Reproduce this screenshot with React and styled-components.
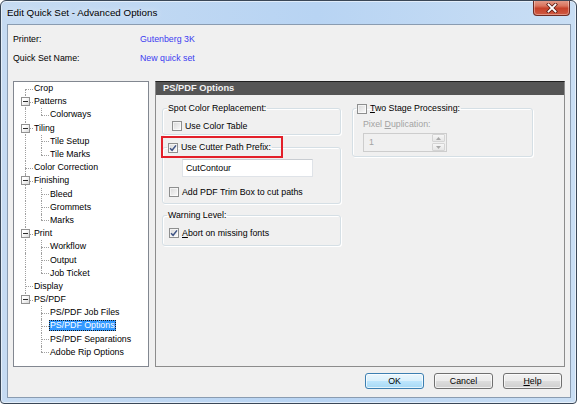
import React from 'react';
import styled, { createGlobalStyle, css } from 'styled-components';

const FONT = `"Liberation Sans", Arial, sans-serif`;

const Global = createGlobalStyle`
  html, body { margin: 0; padding: 0; background: #ffffff; }
  body { width: 577px; height: 404px; overflow: hidden; }
  #root { width: 577px; height: 404px; }
`;

const Window = styled.div`
  width: 577px;
  height: 404px;
  box-sizing: border-box;
  border: 1px solid #3a4757;
  border-radius: 6px 6px 4px 4px;
  background: linear-gradient(90deg, #c6dbf2 0%, #b8d4f3 55%, #c9def4 100%);
  box-shadow: inset 0 0 0 1px rgba(255, 255, 255, 0.55);
  display: flex;
  flex-direction: column;
  overflow: hidden;
  font-family: ${FONT};
  font-size: 8.8px;
  color: #000;
`;

const TitleBar = styled.div`
  height: 23px;
  flex-shrink: 0;
  display: flex;
  align-items: flex-start;
  justify-content: space-between;
  padding-left: 6px;
  padding-right: 6px;
`;

const Title = styled.span`
  font-size: 9.8px;
  line-height: 23px;
  color: #000;
  text-shadow: 0 0 6px rgba(255, 255, 255, 0.9);
`;

const CloseButton = styled.div`
  width: 37px;
  height: 16px;
  margin-top: -1px;
  box-sizing: border-box;
  border: 1px solid #6d2b23;
  border-top: none;
  border-radius: 0 0 4px 4px;
  background: linear-gradient(180deg, #e4a08f 0%, #d9735d 40%, #c6412a 55%, #cf5a42 100%);
  box-shadow: inset 0 0 0 1px rgba(255, 255, 255, 0.35);
  display: flex;
  align-items: center;
  justify-content: center;
`;

const Client = styled.div`
  flex: 1;
  margin: 0 5px 5px 6px;
  border: 1px solid #8a9cb1;
  background: #f0f0f0;
  display: flex;
  flex-direction: column;
  padding: 4px 5px 8px 5px;
  min-height: 0;
`;

const Info = styled.div`
  display: grid;
  grid-template-columns: 127px 1fr;
  grid-auto-rows: 19px;
  align-items: center;
`;

const InfoValue = styled.span`
  color: #3b3bf0;
`;

const Main = styled.div`
  margin-top: 14px;
  height: 286px;
  display: flex;
  gap: 6px;
`;

const Tree = styled.div`
  width: 136px;
  box-sizing: border-box;
  border: 1px solid #828790;
  background: #ffffff;
  padding-left: 3px;
  display: flex;
  flex-direction: column;
`;

const TreeRow = styled.div`
  height: 13.2px;
  display: flex;
  align-items: center;
`;

const dotted = '1px dotted #a0a0a0';

const Guide = styled.span`
  position: relative;
  width: 16px;
  height: 100%;
  flex-shrink: 0;
  &::before {
    content: '';
    position: absolute;
    left: 8px;
    border-left: ${dotted};
    top: ${(p) => (p.$v === 'bottom' ? '50%' : '0')};
    bottom: ${(p) => (p.$v === 'top' ? '50%' : '0')};
    display: ${(p) => (p.$v === 'none' ? 'none' : 'block')};
  }
  &::after {
    content: '';
    position: absolute;
    left: 8px;
    right: 0;
    top: 50%;
    border-top: ${dotted};
    display: ${(p) => (p.$h ? 'block' : 'none')};
  }
`;

const Expander = styled.span`
  position: absolute;
  z-index: 1;
  left: 4px;
  top: 50%;
  margin-top: -4.5px;
  width: 9px;
  height: 9px;
  box-sizing: border-box;
  border: 1px solid #919191;
  background: linear-gradient(135deg, #ffffff 30%, #d9d9d9 100%);
  &::after {
    content: '';
    position: absolute;
    left: 1px;
    right: 1px;
    top: 3px;
    height: 1px;
    background: #2b2b2b;
  }
`;

const TreeLabel = styled.span`
  padding: 0 1px;
  line-height: 11px;
  height: 11px;
  white-space: nowrap;
  ${(p) =>
    p.$selected &&
    css`
      background: #3399ff;
      color: #ffffff;
      outline: 1px dotted #1a1a1a;
      outline-offset: -1px;
    `}
`;

const Panel = styled.div`
  width: 410px;
  box-sizing: border-box;
  border: 1px solid #8c8c8c;
  border-top-color: #1f1f1f;
  display: flex;
  flex-direction: column;
`;

const PanelHeader = styled.div`
  height: 13px;
  flex-shrink: 0;
  background: #555555;
  color: #f2f2f2;
  font-weight: bold;
  font-size: 9.3px;
  line-height: 13px;
  padding-left: 7px;
`;

const PanelBody = styled.div`
  display: flex;
  gap: 11px;
  padding: 7px 0 0 6px;
  align-items: flex-start;
`;

const Column = styled.div`
  width: ${(p) => p.$w}px;
  display: flex;
  flex-direction: column;
`;

const Group = styled.fieldset`
  margin: ${(p) => p.$mt || 0}px 0 0 0;
  padding: 0;
  border: 1px solid #d5dfe5;
  border-radius: 3px;
  box-shadow: inset 1px 1px 0 #ffffff, 1px 1px 0 #ffffff;
  min-width: 0;
`;

const Legend = styled.legend`
  position: relative;
  margin-left: ${(p) => p.$ml ?? 4}px;
  padding: 0 1px;
  height: 13px;
  line-height: 13px;
  display: flex;
  align-items: center;
  gap: 3px;
  white-space: nowrap;
`;

const GroupContent = styled.div`
  padding: ${(p) => p.$pt}px 0 ${(p) => p.$pb}px ${(p) => p.$pl}px;
  display: flex;
  flex-direction: column;
  align-items: flex-start;
`;

const CheckRow = styled.div`
  height: 13px;
  margin-top: ${(p) => p.$mt || 0}px;
  display: flex;
  align-items: center;
  gap: 3px;
  white-space: nowrap;
`;

const Box = styled.span`
  width: 10px;
  height: 10px;
  box-sizing: border-box;
  border: 1px solid #8e8f8f;
  background: linear-gradient(135deg, #d8d8d8 0%, #f4f4f4 80%);
  box-shadow: inset 0 0 0 1px rgba(255, 255, 255, 0.6);
  display: inline-flex;
  align-items: center;
  justify-content: center;
  flex-shrink: 0;
`;

const Annotation = styled.span`
  position: absolute;
  left: -6px;
  top: -5px;
  width: 122px;
  height: 22px;
  box-sizing: border-box;
  border: 2px solid #e3202a;
  pointer-events: none;
`;

const TextInput = styled.input`
  margin: 5px 0 0 19px;
  width: 131px;
  height: 18px;
  box-sizing: border-box;
  border: 1px solid #dfe3e8;
  border-top-color: #c9cdd2;
  background: #ffffff;
  padding: 0 0 0 3px;
  font-family: ${FONT};
  font-size: 8.8px;
  color: #000;
  outline: none;
`;

const DisabledLabel = styled.div`
  margin-top: 3px;
  height: 13px;
  line-height: 13px;
  color: #a3a3a3;
`;

const Spin = styled.div`
  margin-top: 2px;
  width: 84px;
  height: 19px;
  box-sizing: border-box;
  border: 1px solid #cdcdcd;
  background: #f0f0f0;
  display: flex;
  align-items: stretch;
`;

const SpinValue = styled.span`
  flex: 1;
  padding-left: 5px;
  line-height: 17px;
  color: #a3a3a3;
`;

const SpinButtons = styled.div`
  width: 13px;
  display: flex;
  flex-direction: column;
  gap: 1px;
  padding: 0 1px 0 0;
`;

const SpinButton = styled.span`
  flex: 1;
  border: 1px solid #d4d4d4;
  border-radius: 1px;
  background: linear-gradient(180deg, #f6f6f6, #e6e6e6);
  display: flex;
  align-items: center;
  justify-content: center;
`;

const U = styled.span`
  text-decoration: underline;
  text-underline-offset: 1px;
`;

const ButtonRow = styled.div`
  margin-top: 6px;
  padding-right: 3px;
  display: flex;
  justify-content: flex-end;
  gap: 10px;
`;

const Button = styled.div`
  width: 59px;
  height: 16px;
  box-sizing: border-box;
  border: 1px solid ${(p) => (p.$default ? '#3c7fb1' : '#707070')};
  border-radius: 3px;
  background: ${(p) =>
    p.$default
      ? 'linear-gradient(180deg, #eaf6fd 0%, #d9f0fc 50%, #bee6fd 50%, #a7d9f5 100%)'
      : 'linear-gradient(180deg, #f2f2f2 0%, #ebebeb 50%, #dddddd 50%, #cfcfcf 100%)'};
  box-shadow: inset 0 0 0 1px rgba(255, 255, 255, 0.7);
  display: flex;
  align-items: center;
  justify-content: center;
  line-height: 14px;
`;

const CheckMark = () => (
  <svg width="8" height="8" viewBox="0 0 8 8">
    <path d="M1 4.2 L3.1 6.3 L7 1.4" fill="none" stroke="#3f5485" strokeWidth="1.5" />
  </svg>
);

const Checkbox = ({ checked }) => <Box>{checked && <CheckMark />}</Box>;

const treeData = [
  { label: 'Crop', d: 0, v: 'bottom' },
  { label: 'Patterns', d: 0, v: 'full', exp: true },
  { label: 'Colorways', d: 1, outer: true, v: 'top' },
  { label: 'Tiling', d: 0, v: 'full', exp: true },
  { label: 'Tile Setup', d: 1, outer: true, v: 'full' },
  { label: 'Tile Marks', d: 1, outer: true, v: 'top' },
  { label: 'Color Correction', d: 0, v: 'full' },
  { label: 'Finishing', d: 0, v: 'full', exp: true },
  { label: 'Bleed', d: 1, outer: true, v: 'full' },
  { label: 'Grommets', d: 1, outer: true, v: 'full' },
  { label: 'Marks', d: 1, outer: true, v: 'top' },
  { label: 'Print', d: 0, v: 'full', exp: true },
  { label: 'Workflow', d: 1, outer: true, v: 'full' },
  { label: 'Output', d: 1, outer: true, v: 'full' },
  { label: 'Job Ticket', d: 1, outer: true, v: 'top' },
  { label: 'Display', d: 0, v: 'full' },
  { label: 'PS/PDF', d: 0, v: 'top', exp: true },
  { label: 'PS/PDF Job Files', d: 1, outer: false, v: 'full' },
  { label: 'PS/PDF Options', d: 1, outer: false, v: 'full', selected: true },
  { label: 'PS/PDF Separations', d: 1, outer: false, v: 'full' },
  { label: 'Adobe Rip Options', d: 1, outer: false, v: 'top' },
];

const CloseGlyph = () => (
  <svg width="12" height="10" viewBox="0 0 12 10">
    <path d="M2.5 1.5 L9.5 8.5 M9.5 1.5 L2.5 8.5" stroke="#5a1d16" strokeWidth="3.4" strokeLinecap="square" />
    <path d="M2.5 1.5 L9.5 8.5 M9.5 1.5 L2.5 8.5" stroke="#ffffff" strokeWidth="1.8" strokeLinecap="square" />
  </svg>
);

const Arrow = ({ up }) => (
  <svg width="5" height="3" viewBox="0 0 5 3">
    <path d={up ? 'M0 3 L2.5 0 L5 3 Z' : 'M0 0 L5 0 L2.5 3 Z'} fill="#a8a8a8" />
  </svg>
);

export default function App() {
  return (
    <>
      <Global />
      <Window>
        <TitleBar>
          <Title>Edit Quick Set - Advanced Options</Title>
          <CloseButton>
            <CloseGlyph />
          </CloseButton>
        </TitleBar>
        <Client>
          <Info>
            <span>Printer:</span>
            <InfoValue>Gutenberg 3K</InfoValue>
            <span>Quick Set Name:</span>
            <InfoValue>New quick set</InfoValue>
          </Info>
          <Main>
            <Tree>
              {treeData.map((n) => (
                <TreeRow key={n.label}>
                  {n.d === 0 ? (
                    <Guide $v={n.v} $h>
                      {n.exp && <Expander />}
                    </Guide>
                  ) : (
                    <>
                      <Guide $v={n.outer ? 'full' : 'none'} />
                      <Guide $v={n.v} $h />
                    </>
                  )}
                  <TreeLabel $selected={n.selected}>{n.label}</TreeLabel>
                </TreeRow>
              ))}
            </Tree>
            <Panel>
              <PanelHeader>PS/PDF Options</PanelHeader>
              <PanelBody>
                <Column $w={179}>
                  <Group>
                    <Legend>Spot Color Replacement:</Legend>
                    <GroupContent $pt={4} $pb={2} $pl={9}>
                      <CheckRow>
                        <Checkbox />
                        <span>Use Color Table</span>
                      </CheckRow>
                    </GroupContent>
                  </Group>
                  <Group $mt={6}>
                    <Legend $ml={4}>
                      <Annotation />
                      <Checkbox checked />
                      <span>Use Cutter Path Prefix:</span>
                    </Legend>
                    <GroupContent $pt={0} $pb={5} $pl={0}>
                      <TextInput value="CutContour" readOnly />
                      <CheckRow $mt={8} style={{ marginLeft: 6 }}>
                        <Checkbox />
                        <span>Add PDF Trim Box to cut paths</span>
                      </CheckRow>
                    </GroupContent>
                  </Group>
                  <Group $mt={5}>
                    <Legend>Warning Level:</Legend>
                    <GroupContent $pt={4} $pb={6} $pl={6}>
                      <CheckRow>
                        <Checkbox checked />
                        <span>
                          <U>A</U>bort on missing fonts
                        </span>
                      </CheckRow>
                    </GroupContent>
                  </Group>
                </Column>
                <Column $w={181}>
                  <Group>
                    <Legend $ml={3}>
                      <Checkbox />
                      <span>
                        <U>T</U>wo Stage Processing:
                      </span>
                    </Legend>
                    <GroupContent $pt={0} $pb={4} $pl={10}>
                      <DisabledLabel>
                        Pixel <U>D</U>uplication:
                      </DisabledLabel>
                      <Spin>
                        <SpinValue>1</SpinValue>
                        <SpinButtons>
                          <SpinButton>
                            <Arrow up />
                          </SpinButton>
                          <SpinButton>
                            <Arrow />
                          </SpinButton>
                        </SpinButtons>
                      </Spin>
                    </GroupContent>
                  </Group>
                </Column>
              </PanelBody>
            </Panel>
          </Main>
          <ButtonRow>
            <Button $default>OK</Button>
            <Button>Cancel</Button>
            <Button>
              <span>
                <U>H</U>elp
              </span>
            </Button>
          </ButtonRow>
        </Client>
      </Window>
    </>
  );
}
